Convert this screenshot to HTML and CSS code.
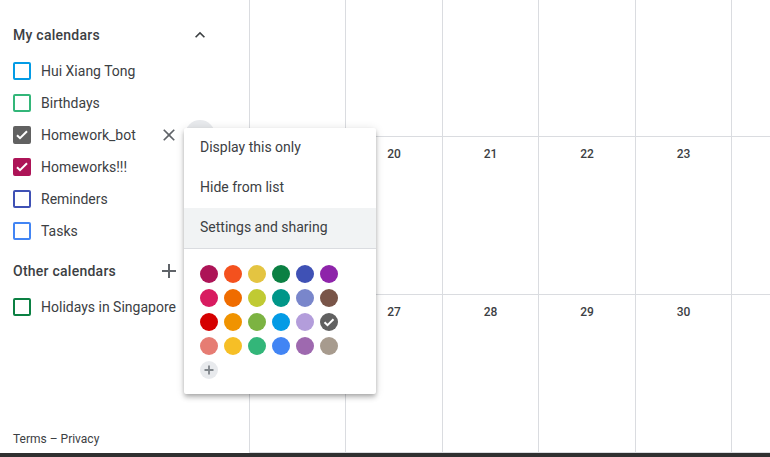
FILE: index.html
```html
<!DOCTYPE html>
<html>
<head>
<meta charset="utf-8">
<link rel="stylesheet" href="styles.css">
</head>
<body>
<div class="app">
  <aside class="sidebar">
    <div class="section-head head-my">
      <span class="section-title">My calendars</span>
      <span class="icon-btn chevron">
        <svg viewBox="0 0 24 24" width="20" height="20"><path d="M7.41 15.41L12 10.83l4.59 4.58L18 14l-6-6-6 6z" fill="#3c4043"/></svg>
      </span>
    </div>
    <div class="cal-item">
      <span class="cb" style="border-color:#039be5"></span><span class="cal-label">Hui Xiang Tong</span>
    </div>
    <div class="cal-item">
      <span class="cb" style="border-color:#33b679"></span><span class="cal-label">Birthdays</span>
    </div>
    <div class="cal-item active">
      <span class="cb checked" style="background:#616161;border-color:#616161">
        <svg viewBox="0 0 18 18" width="18" height="18"><path d="M4 9.2l3 3 7-7" fill="none" stroke="#fff" stroke-width="2"/></svg>
      </span><span class="cal-label">Homework_bot</span>
      <span class="icon-btn close">
        <svg viewBox="0 0 24 24" width="20" height="20"><path d="M19 6.41L17.59 5 12 10.59 6.41 5 5 6.41 10.59 12 5 17.59 6.41 19 12 13.41 17.59 19 19 17.59 13.41 12z" fill="#5f6368"/></svg>
      </span>
      <span class="more-btn"></span>
    </div>
    <div class="cal-item">
      <span class="cb checked" style="background:#ad1457;border-color:#ad1457">
        <svg viewBox="0 0 18 18" width="18" height="18"><path d="M4 9.2l3 3 7-7" fill="none" stroke="#fff" stroke-width="2"/></svg>
      </span><span class="cal-label">Homeworks!!!</span>
    </div>
    <div class="cal-item">
      <span class="cb" style="border-color:#3f51b5"></span><span class="cal-label">Reminders</span>
    </div>
    <div class="cal-item">
      <span class="cb" style="border-color:#4285f4"></span><span class="cal-label">Tasks</span>
    </div>
    <div class="section-head head-other">
      <span class="section-title">Other calendars</span>
      <span class="icon-btn plus">
        <svg viewBox="0 0 24 24" width="24" height="24"><path d="M19 13h-6v6h-2v-6H5v-2h6V5h2v6h6v2z" fill="#5f6368"/></svg>
      </span>
    </div>
    <div class="cal-item">
      <span class="cb" style="border-color:#0b8043"></span><span class="cal-label">Holidays in Singapore</span>
    </div>
    <div class="footer">Terms – Privacy</div>
  </aside>
  <main class="grid">
    <div class="cell"></div><div class="cell"></div><div class="cell"></div><div class="cell"></div><div class="cell"></div><div class="cell"></div>
    <div class="cell"></div><div class="cell"><span class="num">20</span></div><div class="cell"><span class="num">21</span></div><div class="cell"><span class="num">22</span></div><div class="cell"><span class="num">23</span></div><div class="cell"></div>
    <div class="cell"></div><div class="cell"><span class="num">27</span></div><div class="cell"><span class="num">28</span></div><div class="cell"><span class="num">29</span></div><div class="cell"><span class="num">30</span></div><div class="cell"></div>
  </main>
</div>
<div class="bottom-bar"></div>

<div class="menu">
  <div class="menu-item">Display this only</div>
  <div class="menu-item">Hide from list</div>
  <div class="menu-item hover">Settings and sharing</div>
  <div class="palette">
    <span class="dot" style="background:#ad1457"></span>
    <span class="dot" style="background:#f4511e"></span>
    <span class="dot" style="background:#e4c441"></span>
    <span class="dot" style="background:#0b8043"></span>
    <span class="dot" style="background:#3f51b5"></span>
    <span class="dot" style="background:#8e24aa"></span>
    <span class="dot" style="background:#d81b60"></span>
    <span class="dot" style="background:#ef6c00"></span>
    <span class="dot" style="background:#c0ca33"></span>
    <span class="dot" style="background:#009688"></span>
    <span class="dot" style="background:#7986cb"></span>
    <span class="dot" style="background:#795548"></span>
    <span class="dot" style="background:#d50000"></span>
    <span class="dot" style="background:#f09300"></span>
    <span class="dot" style="background:#7cb342"></span>
    <span class="dot" style="background:#039be5"></span>
    <span class="dot" style="background:#b39ddb"></span>
    <span class="dot selected" style="background:#616161">
      <svg viewBox="0 0 18 18" width="18" height="18"><path d="M4.5 9.2l3 3 6-6" fill="none" stroke="#fff" stroke-width="2"/></svg>
    </span>
    <span class="dot" style="background:#e67c73"></span>
    <span class="dot" style="background:#f6bf26"></span>
    <span class="dot" style="background:#33b679"></span>
    <span class="dot" style="background:#4285f4"></span>
    <span class="dot" style="background:#9e69af"></span>
    <span class="dot" style="background:#a79b8e"></span>
    <span class="dot add">
      <svg viewBox="0 0 18 18" width="18" height="18"><path d="M9 4.5v9M4.5 9h9" stroke="#80868b" stroke-width="1.8"/></svg>
    </span>
  </div>
</div>
</body>
</html>
```

FILE: styles.css
```css
* { box-sizing: border-box; }

html, body {
  margin: 0;
  padding: 0;
  width: 770px;
  height: 457px;
  overflow: hidden;
  background: #fff;
  font-family: Roboto, "Liberation Sans", sans-serif;
  color: #3c4043;
}

.app {
  display: flex;
  height: 453px;
  overflow: hidden;
}

.sidebar {
  width: 249px;
  flex: none;
  display: flex;
  flex-direction: column;
  padding-top: 15px;
}

.section-head {
  height: 40px;
  display: flex;
  align-items: center;
  padding-left: 13px;
}

.head-my { padding-right: 37px; }
.head-other { height: 40px; margin-top: 4px; padding-right: 68px; }

.section-title {
  flex: 1;
  font-size: 14px;
  font-weight: 500;
  letter-spacing: 0.25px;
  color: #3c4043;
}

.icon-btn {
  display: flex;
  align-items: center;
  justify-content: center;
  width: 24px;
  height: 24px;
}

.cal-item {
  height: 32px;
  display: flex;
  align-items: center;
  padding-left: 13px;
  padding-right: 34px;
}

.cb {
  width: 18px;
  height: 18px;
  border: 2px solid #616161;
  border-radius: 2px;
  flex: none;
  display: flex;
  align-items: center;
  justify-content: center;
}

.cb svg { flex: none; }

.cal-label {
  margin-left: 10px;
  font-size: 14px;
  color: #3c4043;
  flex: 1;
  white-space: nowrap;
}

.close { margin-right: 4px; }

.more-btn {
  width: 30px;
  height: 30px;
  border-radius: 50%;
  background: #e8eaed;
  flex: none;
}

.footer {
  margin-top: auto;
  padding: 0 13px 6px;
  font-size: 12px;
  line-height: 16px;
  color: #3c4043;
}

.grid {
  flex: 1;
  display: grid;
  grid-template-columns: 96px 97px 96px 97px 96px 97px;
  grid-template-rows: 137px 158px 158px;
}

.cell {
  border-left: 1px solid #dadce0;
  border-bottom: 1px solid #dadce0;
  text-align: center;
  padding-top: 6px;
}

.num {
  font-size: 12px;
  font-weight: 500;
  line-height: 16px;
  color: #3c4043;
}

.bottom-bar {
  height: 4px;
  background: #303030;
}

.menu {
  position: absolute;
  left: 184px;
  top: 128px;
  width: 192px;
  height: 266px;
  background: #fff;
  border-radius: 2px;
  box-shadow: 0 4px 5px 0 rgba(0,0,0,0.14), 0 1px 10px 0 rgba(0,0,0,0.12), 0 2px 4px -1px rgba(0,0,0,0.2);
}

.menu-item {
  height: 40px;
  line-height: 38px;
  padding: 0 16px;
  font-size: 14px;
  color: #3c4043;
}

.menu-item.hover { background: #f1f3f4; }

.palette {
  border-top: 1px solid #dadce0;
  padding: 16px 16px 15px;
  display: grid;
  grid-template-columns: repeat(6, 18px);
  grid-auto-rows: 18px;
  gap: 6px;
}

.dot {
  width: 18px;
  height: 18px;
  border-radius: 50%;
  display: flex;
  align-items: center;
  justify-content: center;
}

.dot.add { background: #e8eaed; }
```
